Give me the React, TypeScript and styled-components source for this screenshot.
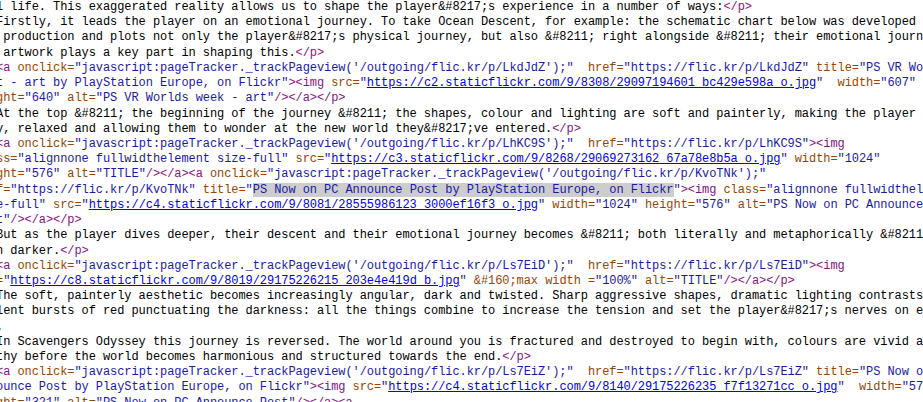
import React from 'react'
import styled, { createGlobalStyle } from 'styled-components'

const GlobalStyle = createGlobalStyle`
  html, body {
    margin: 0;
    padding: 0;
    background: #fff;
  }
`

type Kind = 'text' | 'tag' | 'attr' | 'value' | 'link' | 'hl'
type Seg = [Kind, string]

const colors: Record<Kind, string> = {
  text: '#000',
  tag: '#881280',
  attr: '#994500',
  value: '#1a1aa6',
  link: '#0000ee',
  hl: '#1a1aa6',
}

const Viewer = styled.div`
  width: 923px;
  height: 402px;
  overflow: hidden;
  background: #fff;
`

const Lines = styled.div`
  margin-left: -4px;
  font-family: "Liberation Mono", "DejaVu Sans Mono", monospace;
  font-size: 12px;
  letter-spacing: -0.07px;
  line-height: 15.23px;
`

const Line = styled.div`
  white-space: pre;
  height: 15.23px;
`

const Token = styled.span<{ $kind: Kind }>`
  color: ${p => colors[p.$kind]};
  text-decoration: ${p => (p.$kind === 'link' ? 'underline' : 'none')};
  background: ${p => (p.$kind === 'hl' ? '#cdcdcd' : 'transparent')};
`

const source: Seg[][] = [
  [['text', 'l life. This exaggerated reality allows us to shape the player&#8217;s experience in a number of ways:'], ['tag', '</p>']],
  [['text', 'Firstly, it leads the player on an emotional journey. To take Ocean Descent, for example: the schematic chart below was developed in']],
  [['text', ' production and plots not only the player&#8217;s physical journey, but also &#8211; right alongside &#8211; their emotional journey']],
  [['text', ' artwork plays a key part in shaping this.'], ['tag', '</p>']],
  [['tag', '<a'], ['attr', ' onclick='], ['value', `"javascript:pageTracker._trackPageview('/outgoing/flic.kr/p/LkdJdZ');"`], ['attr', '  href='], ['value', '"https://flic.kr/p/LkdJdZ"'], ['attr', ' title='], ['value', '"PS VR Worlds week - art by']],
  [['value', 't - art by PlayStation Europe, on Flickr"'], ['tag', '><img'], ['attr', ' src='], ['value', '"'], ['link', 'https://c2.staticflickr.com/9/8308/29097194601_bc429e598a_o.jpg'], ['value', '"'], ['attr', '  width='], ['value', '"607"'], ['attr', ' height=']],
  [['attr', 'ght='], ['value', '"640"'], ['attr', ' alt='], ['value', '"PS VR Worlds week - art"'], ['tag', '/></a></p>']],
  [['text', 'At the top &#8211; the beginning of the journey &#8211; the shapes, colour and lighting are soft and painterly, making the player feel']],
  [['text', 'y, relaxed and allowing them to wonder at the new world they&#8217;ve entered.'], ['tag', '</p>']],
  [['tag', '<a'], ['attr', ' onclick='], ['value', `"javascript:pageTracker._trackPageview('/outgoing/flic.kr/p/LhKC9S');"`], ['attr', '  href='], ['value', '"https://flic.kr/p/LhKC9S"'], ['tag', '><img']],
  [['attr', 'ss='], ['value', '"alignnone fullwidthelement size-full"'], ['attr', ' src='], ['value', '"'], ['link', 'https://c3.staticflickr.com/9/8268/29069273162_67a78e8b5a_o.jpg'], ['value', '"'], ['attr', ' width='], ['value', '"1024"']],
  [['attr', 'ght='], ['value', '"576"'], ['attr', ' alt='], ['value', '"TITLE"'], ['tag', '/></a><a'], ['attr', ' onclick='], ['value', `"javascript:pageTracker._trackPageview('/outgoing/flic.kr/p/KvoTNk');"`]],
  [['attr', 'f='], ['value', '"https://flic.kr/p/KvoTNk"'], ['attr', ' title='], ['value', '"'], ['hl', 'PS Now on PC Announce Post by PlayStation Europe, on Flickr'], ['value', '"'], ['tag', '><img'], ['attr', ' class='], ['value', '"alignnone fullwidthelement']],
  [['value', 'e-full"'], ['attr', ' src='], ['value', '"'], ['link', 'https://c4.staticflickr.com/9/8081/28555986123_3000ef16f3_o.jpg'], ['value', '"'], ['attr', ' width='], ['value', '"1024"'], ['attr', ' height='], ['value', '"576"'], ['attr', ' alt='], ['value', '"PS Now on PC Announce Post"']],
  [['value', 't"'], ['tag', '/></a></p>']],
  [['text', 'But as the player dives deeper, their descent and their emotional journey becomes &#8211; both literally and metaphorically &#8211; and']],
  [['text', 'n darker.'], ['tag', '</p>']],
  [['tag', '<a'], ['attr', ' onclick='], ['value', `"javascript:pageTracker._trackPageview('/outgoing/flic.kr/p/Ls7EiD');"`], ['attr', '  href='], ['value', '"https://flic.kr/p/Ls7EiD"'], ['tag', '><img']],
  [['attr', '='], ['value', '"'], ['link', 'https://c8.staticflickr.com/9/8019/29175226215_203e4e419d_b.jpg'], ['value', '"'], ['attr', ' &#160;max width ='], ['value', '"100%"'], ['attr', ' alt='], ['value', '"TITLE"'], ['tag', '/></a></p>']],
  [['text', 'The soft, painterly aesthetic becomes increasingly angular, dark and twisted. Sharp aggressive shapes, dramatic lighting contrasts and']],
  [['text', 'lent bursts of red punctuating the darkness: all the things combine to increase the tension and set the player&#8217;s nerves on edge.']],
  [['text', '.']],
  [['text', 'In Scavengers Odyssey this journey is reversed. The world around you is fractured and destroyed to begin with, colours are vivid and']],
  [['text', 'thy before the world becomes harmonious and structured towards the end.'], ['tag', '</p>']],
  [['tag', '<a'], ['attr', ' onclick='], ['value', `"javascript:pageTracker._trackPageview('/outgoing/flic.kr/p/Ls7EiZ');"`], ['attr', '  href='], ['value', '"https://flic.kr/p/Ls7EiZ"'], ['attr', ' title='], ['value', '"PS Now on PC Announce']],
  [['value', 'ounce Post by PlayStation Europe, on Flickr"'], ['tag', '><img'], ['attr', ' src='], ['value', '"'], ['link', 'https://c4.staticflickr.com/9/8140/29175226235_f7f13271cc_o.jpg'], ['value', '"'], ['attr', '  width='], ['value', '"576"']],
  [['attr', 'ght='], ['value', '"321"'], ['attr', ' alt='], ['value', '"PS Now on PC Announce Post"'], ['tag', '/></a><a']],
]

export default function App() {
  return (
    <>
      <GlobalStyle />
      <Viewer>
        <Lines>
          {source.map((segs, i) => (
            <Line key={i}>
              {segs.map(([kind, str], j) => (
                <Token key={j} $kind={kind}>{str}</Token>
              ))}
            </Line>
          ))}
        </Lines>
      </Viewer>
    </>
  )
}
